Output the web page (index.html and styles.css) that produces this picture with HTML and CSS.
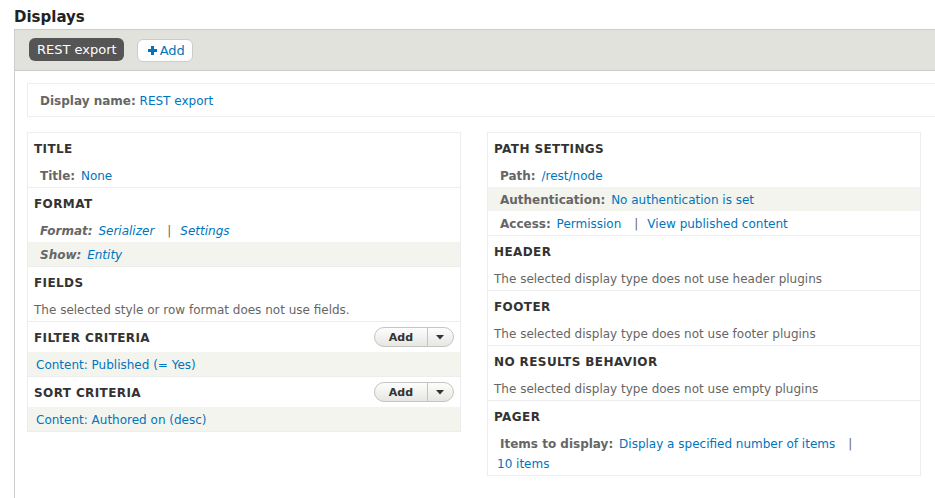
FILE: index.html
```html
<!DOCTYPE html>
<html lang="en">
<head>
<meta charset="utf-8">
<title>Displays</title>
<link rel="stylesheet" href="styles.css">
</head>
<body>
<h2 class="page-title">Displays</h2>
<div class="displays">
  <div class="display-top">
    <span class="tab tab-active">REST export</span>
    <span class="tab tab-add"><svg class="plus" width="9" height="9" viewBox="0 0 9 9"><rect x="3" y="0" width="3" height="9" fill="#0074bd"/><rect x="0" y="3" width="9" height="3" fill="#0074bd"/></svg>Add</span>
  </div>
  <div class="display-body">
    <div class="display-name"><span class="label">Display name:</span> <a class="link">REST export</a></div>
    <div class="columns">
      <div class="column">
        <section class="bucket">
          <div class="bucket-head"><h3>Title</h3></div>
          <div class="setting"><span class="label">Title:</span> <a class="link">None</a></div>
        </section>
        <section class="bucket">
          <div class="bucket-head"><h3>Format</h3></div>
          <div class="setting italic"><span class="label">Format:</span> <a class="link">Serializer</a><span class="sep">|</span><a class="link">Settings</a></div>
          <div class="setting italic alt"><span class="label">Show:</span> <a class="link">Entity</a></div>
        </section>
        <section class="bucket">
          <div class="bucket-head"><h3>Fields</h3></div>
          <div class="desc">The selected style or row format does not use fields.</div>
        </section>
        <section class="bucket">
          <div class="bucket-head"><h3>Filter criteria</h3>
            <div class="dropbutton"><span class="db-main">Add</span><span class="db-toggle"><svg width="8" height="5" viewBox="0 0 8 5"><path d="M0 0H8L4 4.5Z" fill="#333"/></svg></span></div>
          </div>
          <div class="item alt"><a class="link">Content: Published (= Yes)</a></div>
        </section>
        <section class="bucket">
          <div class="bucket-head"><h3>Sort criteria</h3>
            <div class="dropbutton"><span class="db-main">Add</span><span class="db-toggle"><svg width="8" height="5" viewBox="0 0 8 5"><path d="M0 0H8L4 4.5Z" fill="#333"/></svg></span></div>
          </div>
          <div class="item alt"><a class="link">Content: Authored on (desc)</a></div>
        </section>
      </div>
      <div class="column">
        <section class="bucket">
          <div class="bucket-head"><h3>Path Settings</h3></div>
          <div class="setting"><span class="label">Path:</span> <a class="link">/rest/node</a></div>
          <div class="setting alt"><span class="label">Authentication:</span> <a class="link">No authentication is set</a></div>
          <div class="setting"><span class="label">Access:</span> <a class="link">Permission</a><span class="sep">|</span><a class="link">View published content</a></div>
        </section>
        <section class="bucket">
          <div class="bucket-head"><h3>Header</h3></div>
          <div class="desc">The selected display type does not use header plugins</div>
        </section>
        <section class="bucket">
          <div class="bucket-head"><h3>Footer</h3></div>
          <div class="desc">The selected display type does not use footer plugins</div>
        </section>
        <section class="bucket">
          <div class="bucket-head"><h3>No results behavior</h3></div>
          <div class="desc">The selected display type does not use empty plugins</div>
        </section>
        <section class="bucket">
          <div class="bucket-head"><h3>Pager</h3></div>
          <div class="setting"><span class="label">Items to display:</span> <a class="link">Display a specified number of items</a><span class="sep">|</span><br><a class="link">10 items</a></div>
        </section>
      </div>
    </div>
  </div>
</div>
</body>
</html>
```
FILE: styles.css
```css
html, body {
  margin: 0;
  padding: 0;
  background: #fff;
  overflow: hidden;
}
body {
  font-family: "DejaVu Sans", sans-serif;
  font-size: 12px;
  color: #333;
  padding: 0 0 0 14px;
}
.page-title {
  margin: 7px 0 2px;
  font-size: 15px;
  line-height: 20px;
  font-weight: bold;
  color: #222;
}
.displays {
  width: 960px;
  border: 1px solid #ccc;
  border-right: none;
  min-height: 480px;
}
.display-top {
  background: #e1e2dc;
  border-bottom: 1px solid #ccc;
  height: 41px;
  box-sizing: border-box;
  padding: 8px 0 0 14px;
  display: flex;
  align-items: flex-start;
  gap: 13px;
}
.tab {
  display: inline-flex;
  align-items: center;
  height: 23px;
  box-sizing: border-box;
  font-size: 13px;
  border-radius: 6px;
}
.tab-active {
  background: #555;
  color: #fff;
  padding: 0 7px 0 8px;
}
.tab-add {
  margin-top: 1px;
  background: #fff;
  border: 1px solid #ccc;
  color: #0074bd;
  padding: 0 7px 0 10px;
  gap: 3px;
}
.plus { display: block; }
.display-body {
  padding: 12px 0 0 12px;
}
.display-name {
  border: 1px solid #eee;
  border-right: none;
  padding: 7px 12px 5px;
  line-height: 20px;
}
.label {
  font-weight: bold;
  color: #666;
}
.link {
  color: #0074bd;
  text-decoration: none;
}
.columns {
  display: grid;
  grid-template-columns: 434px 434px;
  gap: 26px;
  margin-top: 15px;
  align-items: start;
}
.column {
  border: 1px solid #ededed;
}
.bucket + .bucket {
  border-top: 1px solid #ededed;
}
.bucket-head {
  height: 30px;
  box-sizing: border-box;
  padding: 2px 6px 0;
  display: flex;
  align-items: center;
  justify-content: space-between;
}
.bucket-head h3 {
  margin: 0;
  font-size: 12px;
  font-weight: bold;
  text-transform: uppercase;
  letter-spacing: 0.4px;
  color: #333;
}
.setting {
  line-height: 20px;
  padding: 3px 9px 1px;
}
.setting .label {
  margin-left: 3px;
  margin-right: 2px;
}
.italic { font-style: italic; }
.alt { background: #f3f4ee; }
.sep {
  color: #666;
  margin: 0 9px 0 13px;
}
.desc {
  line-height: 20px;
  padding: 3px 6px 1px;
  color: #666;
}
.item {
  line-height: 20px;
  padding: 3px 8px 1px;
}
.dropbutton {
  display: flex;
  height: 20px;
  margin-top: -2px;
  box-sizing: border-box;
  border: 1px solid #c4c4c0;
  border-radius: 10px;
  background: linear-gradient(#fdfdfd, #e6e6e2);
  overflow: hidden;
}
.db-main {
  width: 52px;
  display: flex;
  align-items: center;
  justify-content: center;
  font-size: 11px;
  font-weight: bold;
  color: #333;
  border-right: 1px solid #c4c4c0;
}
.db-toggle {
  width: 25px;
  display: flex;
  align-items: center;
  justify-content: center;
}
.db-toggle svg { display: block; margin-left: -2px; }
```
